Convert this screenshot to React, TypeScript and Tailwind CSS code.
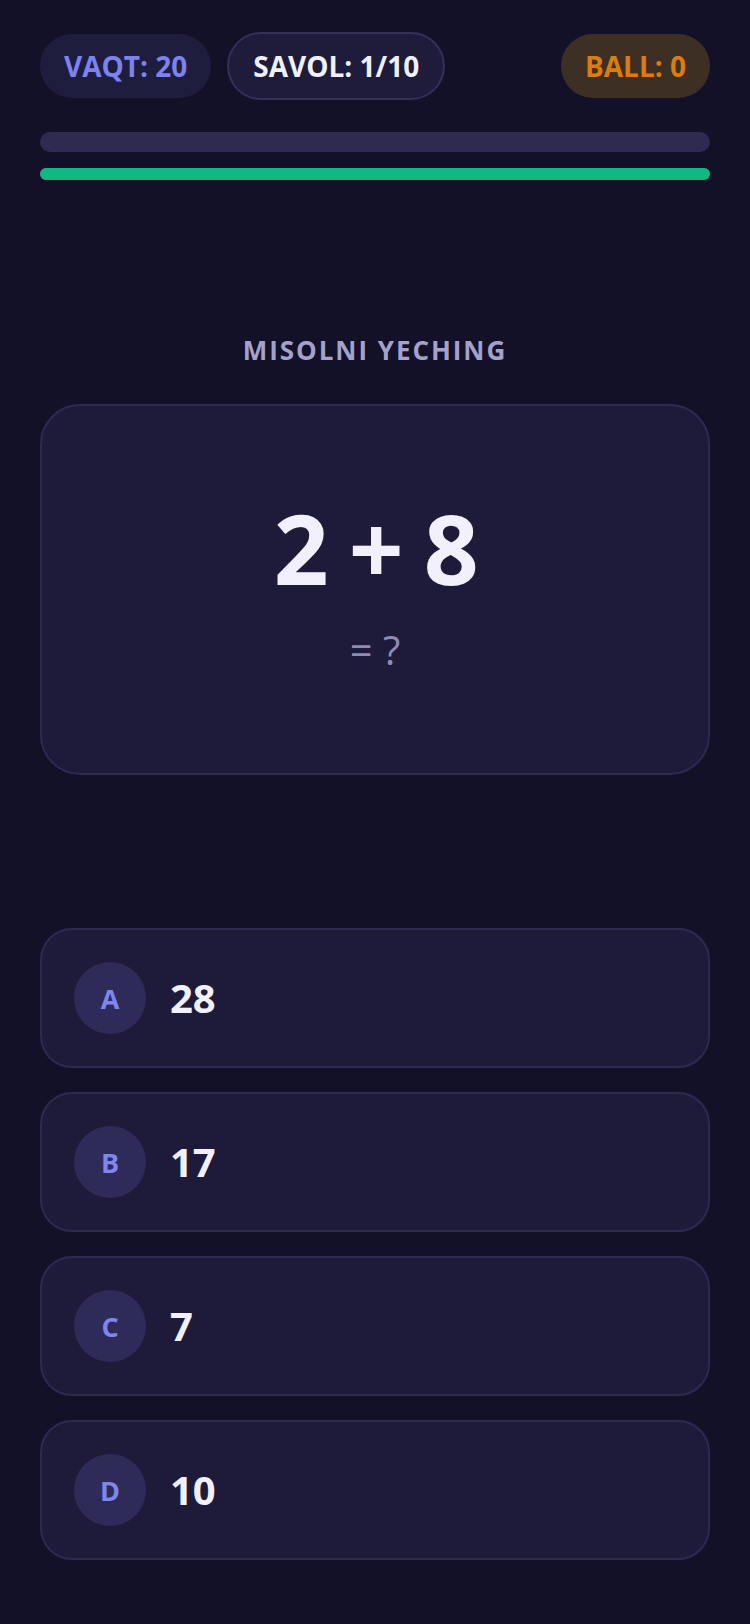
import React from "react";

const options = [
  { key: "A", value: "28" },
  { key: "B", value: "17" },
  { key: "C", value: "7" },
  { key: "D", value: "10" },
];

export default function App() {
  return (
    <div
      className="min-h-[1624px] w-full bg-[#121127] px-10 pt-8"
      style={{ fontFamily: '"Open Sans", "Noto Sans", sans-serif' }}
    >
      {/* Header pills */}
      <div className="flex items-center gap-4">
        <div className="flex h-16 items-center rounded-full bg-[#1f1d3e] px-6 text-[28px] font-bold leading-none text-[#7c82f0]">
          VAQT: 20
        </div>
        <div className="flex h-[68px] items-center rounded-full border-2 border-[#33305c] bg-[#1e1b3b] px-6 text-[28px] font-bold leading-none text-[#f1f0fb]">
          SAVOL: 1/10
        </div>
        <div className="ml-auto flex h-16 items-center rounded-full bg-[#3e2f25] px-6 text-[28px] font-bold leading-none text-[#dc7c0b]">
          BALL: 0
        </div>
      </div>

      {/* Progress bars */}
      <div className="mt-8 h-5 w-full rounded-full bg-[#2e2a51]" />
      <div className="mt-4 h-3 w-full rounded-full bg-[#2e2a51]">
        <div className="h-3 w-full rounded-full bg-[#10b981]" />
      </div>

      {/* Title */}
      <div className="mt-[154px] text-center text-[26px] font-bold leading-8 tracking-[0.075em] text-[#a4a2cd]">
        MISOLNI YECHING
      </div>

      {/* Problem card */}
      <div className="mt-[38px] flex h-[371px] flex-col items-center rounded-[40px] border-2 border-[#2d2a52] bg-[#1e1b3a] pt-[94px]">
        <div className="text-[96px] font-bold leading-none tracking-[-0.025em] text-[#f1f0fb]">
          2 + 8
        </div>
        <div className="mt-[34px] text-[40px] font-normal leading-none text-[#8e8bb8]">
          = ?
        </div>
      </div>

      {/* Options */}
      <div className="mt-[153px] flex flex-col gap-6">
        {options.map((o) => (
          <div
            key={o.key}
            className="flex h-[140px] items-center gap-6 rounded-[32px] border-2 border-[#2d2a52] bg-[#1e1b3a] px-8"
          >
            <div className="flex h-[72px] w-[72px] items-center justify-center rounded-full bg-[#2e2b59] text-[27px] font-bold leading-none text-[#7f86f0]">
              {o.key}
            </div>
            <div className="text-[40px] font-bold leading-none text-[#f1f0fb]">
              {o.value}
            </div>
          </div>
        ))}
      </div>
    </div>
  );
}
